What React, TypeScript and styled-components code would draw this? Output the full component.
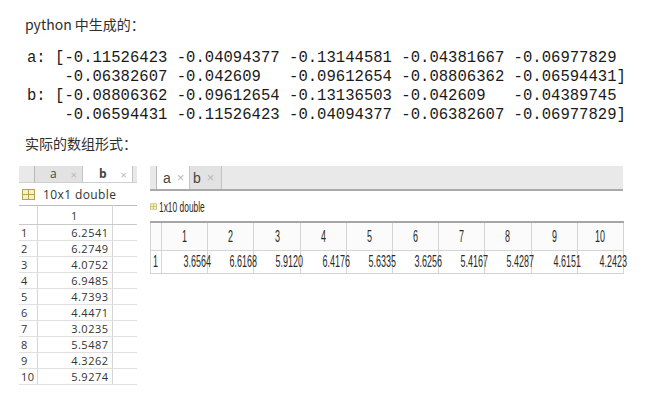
import React from 'react';
import styled, { createGlobalStyle } from 'styled-components';

const GlobalStyle = createGlobalStyle`
  html, body {
    margin: 0;
    background: #ffffff;
  }
  body {
    width: 651px;
    height: 400px;
    overflow: hidden;
  }
`;

const Page = styled.div`
  padding-top: 14px;
  color: #222;
`;

const Caption = styled.p<{ $top?: number }>`
  margin: ${(p) => p.$top ?? 0}px 0 0 25px;
  font-family: 'Noto Sans CJK SC', 'Noto Sans', sans-serif;
  font-size: 14px;
  line-height: 20px;
  color: #2e2e2e;
`;

const Code = styled.pre`
  margin: 15px 0 0 27px;
  font-family: 'Liberation Mono', monospace;
  font-size: 15.6px;
  line-height: 19px;
  color: #1a1a1a;
`;

const Panels = styled.div`
  display: flex;
  align-items: flex-start;
  gap: 13px;
  margin-top: 13px;
  padding-left: 19px;
`;

/* ---------- left (old style) variable editor ---------- */

const LeftPanel = styled.div`
  width: 118px;
  height: 219px;
  overflow: hidden;
  font-family: 'Open Sans', 'Noto Sans', sans-serif;
  color: #333;
`;

const TabBar = styled.div<{ $h: number; $line: string }>`
  display: flex;
  height: ${(p) => p.$h}px;
  background: #e9e9e9;
  border-bottom: ${(p) => p.$line};
`;

const Stub = styled.div<{ $w: number }>`
  flex: 0 0 ${(p) => p.$w}px;
  border-right: 1px solid #b8b8b8;
  box-sizing: border-box;
`;

const Tab = styled.div<{ $w: number; $active?: boolean; $pad: number; $gap: number }>`
  flex: 0 0 ${(p) => p.$w}px;
  box-sizing: border-box;
  display: flex;
  align-items: center;
  gap: ${(p) => p.$gap}px;
  padding-left: ${(p) => p.$pad}px;
  background: ${(p) => (p.$active ? '#ffffff' : '#e2e2e2')};
  border-right: 1px solid #c4c4c4;
`;

const TabLabel = styled.span<{ $size: number; $bold?: boolean }>`
  font-size: ${(p) => p.$size}px;
  font-weight: ${(p) => (p.$bold ? 700 : 400)};
  color: #444;
  line-height: 1;
`;

const Close = styled.span<{ $size: number }>`
  font-size: ${(p) => p.$size}px;
  color: #b9b9b9;
  line-height: 1;
`;

const InfoRow = styled.div<{ $h: number; $gap: number }>`
  display: flex;
  align-items: center;
  gap: ${(p) => p.$gap}px;
  height: ${(p) => p.$h}px;
`;

const InfoText = styled.span`
  font-size: 12px;
  letter-spacing: 0.4px;
  color: #333;
`;

const LeftTable = styled.table`
  border-collapse: collapse;
  table-layout: fixed;
  width: 118px;
  border-top: 1px solid #bdbdbd;
  font-size: 11px;
  letter-spacing: 0.5px;
`;

const LHead = styled.th`
  height: 18px;
  padding: 0;
  font-weight: 400;
  text-align: center;
  border-right: 1px solid #d6d6d6;
  border-bottom: 1px solid #c9c9c9;
`;

const LIndex = styled.td`
  height: 15px;
  padding: 0 0 0 2px;
  text-align: left;
  border-right: 1px solid #d6d6d6;
  border-bottom: 1px solid #e0e0e0;
`;

const LValue = styled.td`
  padding: 0 3px 0 0;
  text-align: right;
  border-right: 1px solid #d6d6d6;
  border-bottom: 1px solid #e0e0e0;
`;

/* ---------- right (new style) variable editor ---------- */

const RightPanel = styled.div`
  width: 473px;
  font-family: 'Liberation Sans', Arial, sans-serif;
  color: #2a2a2a;
`;

const Narrow = styled.span<{ $origin: string; $size: number }>`
  display: inline-block;
  font-size: ${(p) => p.$size}px;
  line-height: 1;
  transform: scaleX(0.56);
  transform-origin: ${(p) => p.$origin};
  white-space: nowrap;
`;

const RightTable = styled.table`
  border-collapse: collapse;
  table-layout: fixed;
  width: 473px;
  border-top: 2px solid #a6a6a6;
  border-left: 1px solid #d4d4d4;
  border-right: 1px solid #d4d4d4;
`;

const RHead = styled.th`
  height: 27px;
  padding: 0;
  font-weight: 400;
  text-align: center;
  background: #fbfbfb;
  border-right: 1px solid #d4d4d4;
  border-bottom: 1px solid #d4d4d4;
`;

const RIndex = styled.td`
  height: 22px;
  padding: 0 0 0 2px;
  text-align: left;
  border-right: 1px solid #d4d4d4;
  border-bottom: 1px solid #d4d4d4;
`;

const RValue = styled.td`
  padding: 0 5px 0 0;
  text-align: right;
  border-right: 1px solid #d4d4d4;
  border-bottom: 1px solid #d4d4d4;
`;

const GridIcon: React.FC<{ w: number; h: number }> = ({ w, h }) => (
  <svg width={w} height={h} viewBox="0 0 13 11">
    <rect x="0.5" y="0.5" width="12" height="10" fill="#f6f0c4" stroke="#b3a64a" />
    <line x1="6.5" y1="0.5" x2="6.5" y2="10.5" stroke="#b3a64a" />
    <line x1="0.5" y1="5.5" x2="12.5" y2="5.5" stroke="#b3a64a" />
  </svg>
);

const codeText = `a: [-0.11526423 -0.04094377 -0.13144581 -0.04381667 -0.06977829
    -0.06382607 -0.042609   -0.09612654 -0.08806362 -0.06594431]
b: [-0.08806362 -0.09612654 -0.13136503 -0.042609   -0.04389745
    -0.06594431 -0.11526423 -0.04094377 -0.06382607 -0.06977829]`;

const bValues = ['6.2541', '6.2749', '4.0752', '6.9485', '4.7393', '4.4471', '3.0235', '5.5487', '4.3262', '5.9274'];
const aValues = ['3.6564', '6.6168', '5.9120', '6.4176', '5.6335', '3.6256', '5.4167', '5.4287', '4.6151', '4.2423'];

export default function App() {
  return (
    <Page>
      <GlobalStyle />
      <Caption>python 中生成的：</Caption>
      <Code>{codeText}</Code>
      <Caption $top={8}>实际的数组形式：</Caption>

      <Panels>
        <LeftPanel>
          <TabBar $h={16} $line="1px solid #cfcfcf">
            <Stub $w={16} />
            <Tab $w={48} $pad={15} $gap={14}>
              <TabLabel $size={12}>a</TabLabel>
              <Close $size={11}>×</Close>
            </Tab>
            <Tab $w={50} $pad={16} $gap={14} $active>
              <TabLabel $size={12} $bold>b</TabLabel>
              <Close $size={11}>×</Close>
            </Tab>
          </TabBar>
          <InfoRow $h={22} $gap={8}>
            <span style={{ marginLeft: 3, display: 'flex' }}>
              <GridIcon w={13} h={11} />
            </span>
            <InfoText>10x1 double</InfoText>
          </InfoRow>
          <LeftTable>
            <colgroup>
              <col style={{ width: 18 }} />
              <col style={{ width: 75 }} />
              <col style={{ width: 25 }} />
            </colgroup>
            <thead>
              <tr>
                <LHead />
                <LHead>1</LHead>
                <LHead />
              </tr>
            </thead>
            <tbody>
              {bValues.map((v, i) => (
                <tr key={v + i}>
                  <LIndex>{i + 1}</LIndex>
                  <LValue>{v}</LValue>
                  <LValue />
                </tr>
              ))}
            </tbody>
          </LeftTable>
        </LeftPanel>

        <RightPanel>
          <TabBar $h={23} $line="2px solid #a9a9a9">
            <Stub $w={7} />
            <Tab $w={33} $pad={6} $gap={6} $active>
              <TabLabel $size={14}>a</TabLabel>
              <Close $size={13}>×</Close>
            </Tab>
            <Tab $w={32} $pad={3} $gap={6}>
              <TabLabel $size={14}>b</TabLabel>
              <Close $size={13}>×</Close>
            </Tab>
          </TabBar>
          <InfoRow $h={30} $gap={2}>
            <span style={{ display: 'flex', width: 7, overflow: 'hidden', justifyContent: 'flex-end' }}>
              <GridIcon w={13} h={13} />
            </span>
            <Narrow $origin="left center" $size={15}>1x10 double</Narrow>
          </InfoRow>
          <RightTable>
            <colgroup>
              <col style={{ width: 11 }} />
              {aValues.map((_, i) => (
                <col key={i} style={{ width: 46.2 }} />
              ))}
            </colgroup>
            <thead>
              <tr>
                <RHead />
                {aValues.map((_, i) => (
                  <RHead key={i}>
                    <Narrow $origin="center" $size={16}>{i + 1}</Narrow>
                  </RHead>
                ))}
              </tr>
            </thead>
            <tbody>
              <tr>
                <RIndex>
                  <Narrow $origin="left center" $size={16}>1</Narrow>
                </RIndex>
                {aValues.map((v, i) => (
                  <RValue key={i}>
                    <Narrow $origin="right center" $size={16}>{v}</Narrow>
                  </RValue>
                ))}
              </tr>
            </tbody>
          </RightTable>
        </RightPanel>
      </Panels>
    </Page>
  );
}
